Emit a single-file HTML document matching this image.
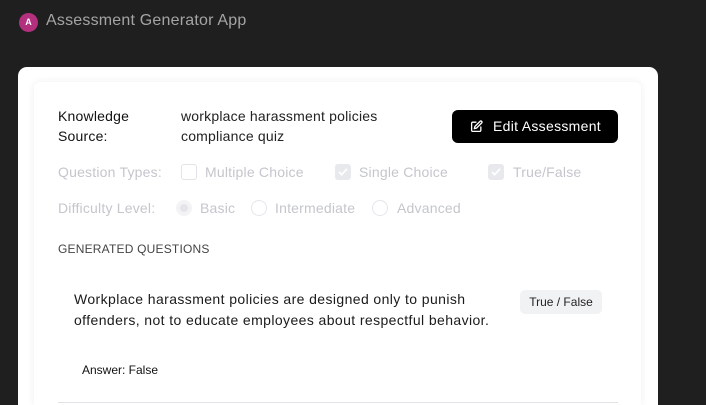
<!DOCTYPE html>
<html style="width:706px;height:405px;overflow:hidden"><head><style>
*{margin:0;padding:0;box-sizing:border-box}
body{width:706px;height:405px;background:#1f1f1f;font-family:"Liberation Sans",sans-serif;position:relative;overflow:hidden}
.a{position:absolute;white-space:nowrap}
.outer{position:absolute;left:18px;top:67px;width:640px;height:338px;background:#fff;border-radius:9px 9px 0 0}
.inner{position:absolute;left:34px;top:82px;width:607px;height:323px;background:#fff;border-radius:6px 6px 0 0;box-shadow:0 0 8px rgba(0,0,0,0.07)}
.lab{font-size:14px;color:#111;letter-spacing:0.2px}
.g{font-size:14px;color:#c4c6cc;letter-spacing:0.2px}
.cb{position:absolute;width:16px;height:16px;border:1px solid #e2e4e8;border-radius:3px;background:#fff}
.cb.on{background:#e8e9ec;border-color:#e8e9ec}
.rd{position:absolute;width:16px;height:16px;border:1px solid #e5e6ea;border-radius:50%;background:#fff}
</style></head><body>
<div class="a" style="left:19px;top:13px;width:19px;height:19px;border-radius:50%;background:#b3307f;color:#fff;font-size:9px;font-weight:bold;text-align:center;line-height:19px">A</div>
<div class="a" style="left:46px;top:12px;font-size:16px;color:#a4a4a4;letter-spacing:0.2px">Assessment Generator App</div>
<div class="outer"></div>
<div class="inner"></div>
<div class="a lab" style="left:58px;top:106px;line-height:20px">Knowledge<br>Source:</div>
<div class="a lab" style="left:181px;top:106px;line-height:20px;color:#222">workplace harassment policies<br>compliance quiz</div>
<div class="a" style="left:452px;top:110px;width:166px;height:33px;background:#000;border-radius:6px;color:#fff;font-size:14px;line-height:33px;padding-left:41px;letter-spacing:0.3px">Edit Assessment
<svg style="position:absolute;left:18px;top:10px" width="13" height="13" viewBox="0 0 24 24" fill="none" stroke="#fff" stroke-width="2.4" stroke-linecap="round" stroke-linejoin="round"><path d="M11 4H5a2 2 0 0 0-2 2v13a2 2 0 0 0 2 2h13a2 2 0 0 0 2-2v-6"/><path d="M18.5 2.5a2.1 2.1 0 0 1 3 3L12 15l-4 1 1-4z"/></svg></div>
<div class="a g" style="left:58px;top:164px">Question Types:</div>
<div class="cb" style="left:181px;top:164px"></div>
<div class="a g" style="left:205px;top:164px">Multiple Choice</div>
<div class="cb on" style="left:335px;top:164px"><svg width="14" height="14" viewBox="0 0 16 16" fill="none" stroke="#fff" stroke-width="2"><path d="M3.5 8l3 3 6-6.5"/></svg></div>
<div class="a g" style="left:359px;top:164px">Single Choice</div>
<div class="cb on" style="left:488px;top:164px"><svg width="14" height="14" viewBox="0 0 16 16" fill="none" stroke="#fff" stroke-width="2"><path d="M3.5 8l3 3 6-6.5"/></svg></div>
<div class="a g" style="left:513px;top:164px">True/False</div>
<div class="a g" style="left:58px;top:200px">Difficulty Level:</div>
<div class="rd" style="left:176px;top:200px;border:4px solid #f3f3f5;background:#e4e5e8"></div>
<div class="a g" style="left:200px;top:200px">Basic</div>
<div class="rd" style="left:251px;top:200px"></div>
<div class="a g" style="left:275px;top:200px">Intermediate</div>
<div class="rd" style="left:372px;top:200px"></div>
<div class="a g" style="left:397px;top:200px">Advanced</div>
<div class="a" style="left:58px;top:242px;font-size:12px;color:#444;letter-spacing:0.2px">GENERATED QUESTIONS</div>
<div class="a" style="left:74px;top:289px;font-size:14px;line-height:21px;color:#1a1a1a;letter-spacing:0.4px">Workplace harassment policies are designed only to punish<br>offenders, not to educate employees about respectful behavior.</div>
<div class="a" style="left:520px;top:290px;width:82px;height:24px;background:#f1f2f4;border-radius:5px;font-size:12px;color:#222;text-align:center;line-height:24px">True / False</div>
<div class="a" style="left:82px;top:363px;font-size:12px;color:#111">Answer: False</div>
<div class="a" style="left:58px;top:402px;width:560px;height:1px;background:#e2e3e8"></div>
</body></html>
